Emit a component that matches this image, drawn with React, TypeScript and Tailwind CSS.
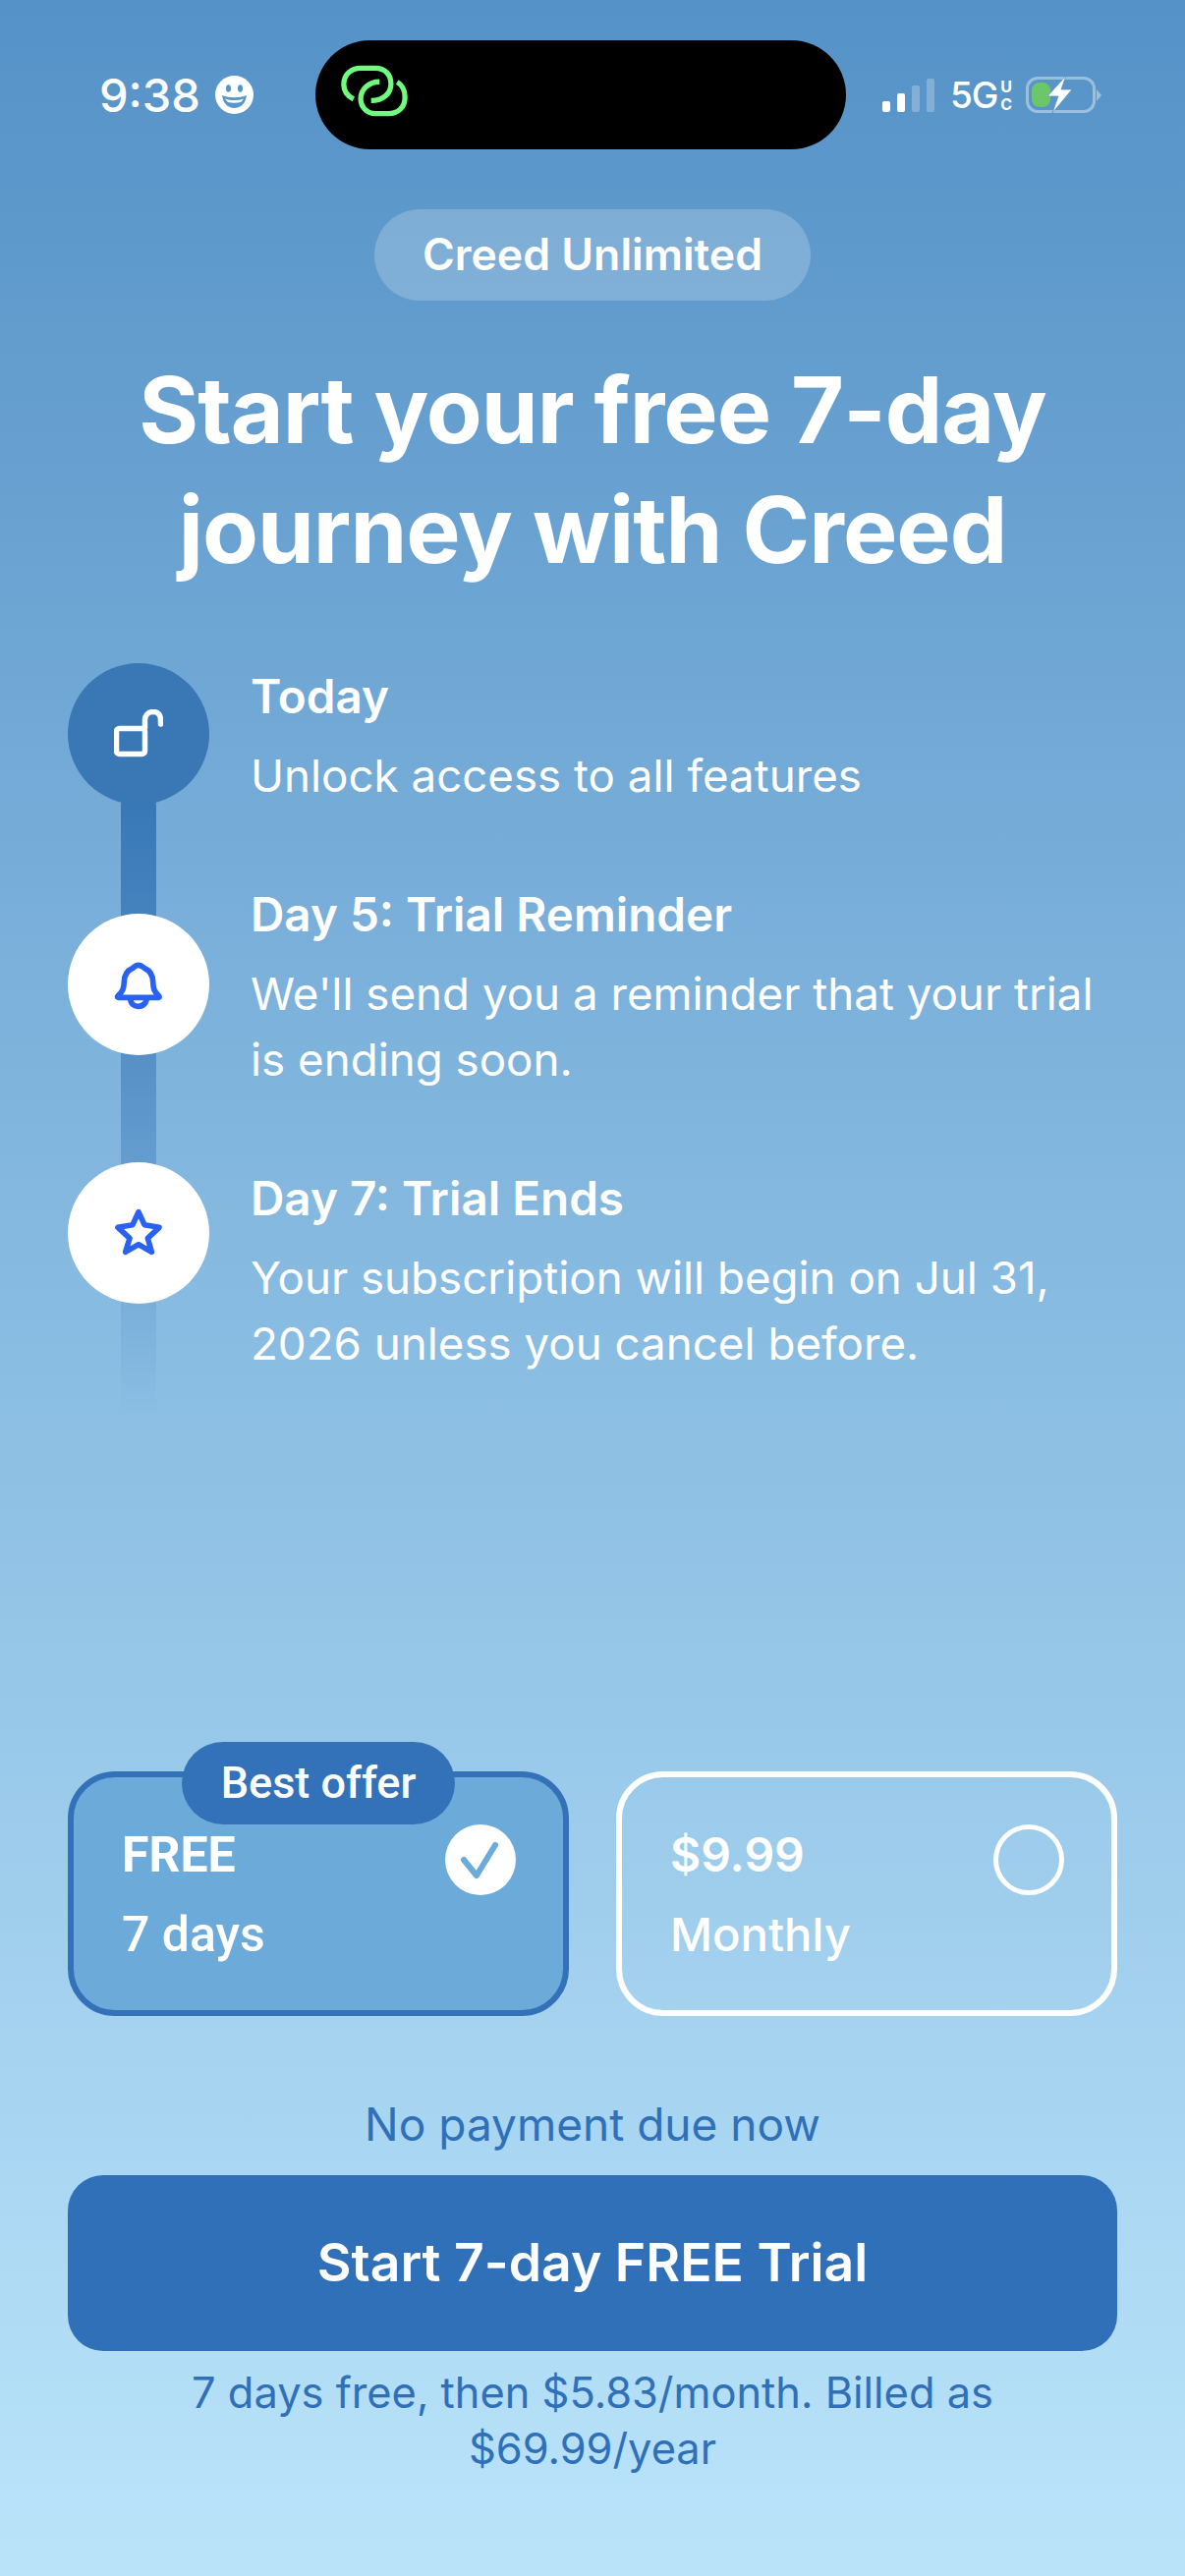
import React from "react";

const inter = { fontFamily: "Inter, sans-serif" };

function StatusBar() {
  return (
    <div className="flex items-center pt-[41px] text-white">
      <div className="w-[321px] pl-[101px] flex items-center gap-[15px]">
        <span className="text-[47px] leading-none font-medium">9:38</span>
        <svg width="39" height="39" viewBox="0 0 39 39">
          <circle cx="19.5" cy="19.5" r="19.5" fill="#fff" />
          <ellipse cx="13.5" cy="13" rx="2.6" ry="3.8" fill="#5a96c9" />
          <ellipse cx="25.5" cy="13" rx="2.6" ry="3.8" fill="#5a96c9" />
          <path d="M7 20 C15 23 24 23 32 20 C31 28 26 33 19.5 33 C13 33 8 28 7 20Z" fill="#5a96c9" />
          <path d="M10 23.5 C16 25.5 23 25.5 29 23.5 C28 25 27 26 26 27 C22 28 17 28 13 27 C12 26 11 25 10 23.5Z" fill="#fff" />
        </svg>
      </div>
      <div className="w-[540px] h-[111px] rounded-full bg-black flex items-center pl-[26px] shrink-0">
        <svg width="68" height="53" viewBox="800 60 204 160" fill="none" stroke="#70fb7c" strokeWidth="16" strokeLinecap="butt" className="-mt-[8px]">
          <path d="M838 165 C818 155 808 140 808 120 C808 90 830 70 860 70 L905 70 C935 70 953 90 953 118 C953 148 930 170 892 170" />
          <path d="M972 113 C988 122 996 140 996 160 C996 190 975 210 945 210 L905 210 C880 210 860 190 860 165 C860 135 885 112 918 112" />
        </svg>
      </div>
      <div className="flex-1 flex items-center pl-[37px]">
        <div className="flex items-end gap-[7px] h-[34px] w-[54px]">
          <div className="w-[8px] h-[11px] rounded-[2px] bg-white" />
          <div className="w-[8px] h-[19px] rounded-[2px] bg-white" />
          <div className="w-[8px] h-[27px] rounded-[2px] bg-white/25" />
          <div className="w-[8px] h-[34px] rounded-[2px] bg-white/25" />
        </div>
        <span className="ml-[15px] text-[37px] leading-none font-medium tracking-[-1px]">5G</span>
        <div className="ml-[2px] flex flex-col items-center text-[16px] leading-[18px] font-bold w-[13px]">
          <span>U</span>
          <span>C</span>
        </div>
        <div className="relative ml-[13px] w-[71px] h-[37px] rounded-[12px] border-[3px] border-white/40">
          <div className="absolute left-[3px] top-[3px] w-[19px] h-[25px] rounded-[8px] bg-[#6cc76b]" />
          <svg width="28" height="40" viewBox="0 0 28 40" className="absolute left-[18px] -top-[5px]">
            <path d="M20 1 L1 22 L12 22 L6 39 L26 15 L15 15 Z" fill="#fff" stroke="#5a96c9" strokeWidth="0.8" />
          </svg>
          <div className="absolute -right-[9px] top-[10px] w-0 h-0 border-y-[6px] border-y-transparent border-l-[5px] border-l-white/40" />
        </div>
      </div>
    </div>
  );
}

function UnlockIcon() {
  return (
    <svg width="50" height="50" viewBox="0 0 50 50" fill="none" stroke="#fff" strokeWidth="5.5" strokeLinecap="round" strokeLinejoin="round">
      <rect x="2.5" y="19.5" width="29" height="26" rx="3" />
      <path d="M31.5 19 V11 C31.5 6 35 2.5 40 2.5 C45 2.5 47.5 6 47.5 11 V15" />
    </svg>
  );
}

function BellIcon() {
  return (
    <svg width="60" height="60" viewBox="33 33 180 180" fill="none" stroke="#2962f0" strokeWidth="17" strokeLinecap="round" strokeLinejoin="round">
      <path d="M122 64 C112 64 108 72 104 74 C90 80 80 92 79 115 C78 135 75 145 60 158 C58 160 58 163 62 163 H184 C187 163 187 160 185 158 C170 145 168 135 167 115 C166 92 156 80 142 74 C138 72 134 64 122 64 Z" />
      <path d="M98 168 C100 185 112 190 122 190 C132 190 144 185 148 168" />
    </svg>
  );
}

function StarIcon() {
  return (
    <svg width="60" height="60" viewBox="33 42 180 180" fill="none" stroke="#2962f0" strokeWidth="17" strokeLinecap="round" strokeLinejoin="round">
      <path d="M123 68 L141 107 L186 115 L151 148 L163 190 L123 167 L83 190 L96 148 L60 115 L105 107 Z" />
    </svg>
  );
}

function Step({ icon, dark, title, lines, offset }: { icon: React.ReactNode; dark?: boolean; title: string; lines: string[]; offset: string }) {
  return (
    <div className="flex items-start gap-[42px]">
      <div className={`w-[144px] h-[144px] rounded-full flex items-center justify-center shrink-0 ${dark ? "bg-[#3a78b5]" : "bg-white"} ${offset}`}>
        {icon}
      </div>
      <div className="text-white">
        <div className="text-[47.6px] leading-[66px] font-semibold mb-[14px]">{title}</div>
        {lines.map((l) => (
          <div key={l} className="text-[45.7px] leading-[67px] font-normal">{l}</div>
        ))}
      </div>
    </div>
  );
}

export default function App() {
  return (
    <div
      className="w-[1206px] h-[2622px] flex flex-col bg-linear-to-b from-[#5592c7] to-[#bae4fa] overflow-hidden"
      style={inter}
    >
      <StatusBar />

      <div className="self-center mt-[61px] w-[444px] h-[93px] rounded-full bg-white/20 flex items-center justify-center text-white text-[44.6px] font-semibold">
        Creed Unlimited
      </div>

      <h1 className="mt-[50px] text-center text-white text-[93px] leading-[122px] font-bold tracking-[-1px]">
        Start your free 7-day
        <br />
        journey with Creed
      </h1>

      <div className="relative mt-[76px] px-[69px] flex flex-col gap-[75px]">
        <div className="absolute left-[123px] top-[130px] w-[36px] h-[635px] rounded-t-[14px] bg-linear-to-b from-[#3877b7] to-[#3877b7]/0" />
        <div className="relative">
          <Step dark offset="-mt-[1px]" icon={<UnlockIcon />} title="Today" lines={["Unlock access to all features"]} />
        </div>
        <div className="relative">
          <Step offset="mt-[32px]" icon={<BellIcon />} title="Day 5: Trial Reminder" lines={["We'll send you a reminder that your trial", "is ending soon."]} />
        </div>
        <div className="relative">
          <Step offset="-mt-[4px]" icon={<StarIcon />} title="Day 7: Trial Ends" lines={["Your subscription will begin on Jul 31,", "2026 unless you cancel before."]} />
        </div>
      </div>

      <div className="mt-auto px-[69px] flex gap-[48px]">
        <div className="relative flex-1 h-[249px] rounded-[48px] border-[6px] border-[#3372b8] bg-[#6caad9] pt-[49px] pl-[49px] pr-[48px] flex justify-between items-start text-white" style={{ fontFamily: "Roboto, sans-serif" }}>
          <div className="absolute left-[110px] -top-[36px] w-[278px] h-[84px] rounded-full bg-[#3372b8] flex items-center justify-center text-[45px] font-medium">
            Best offer
          </div>
          <div>
            <div className="text-[50px] leading-[60px] font-bold">FREE</div>
            <div className="text-[50px] leading-[60px] font-medium mt-[21px]">7 days</div>
          </div>
          <div className="w-[72px] h-[72px] rounded-full bg-white flex items-center justify-center -mt-[1px]">
            <svg width="72" height="72" viewBox="-36 -36 72 72" fill="none" stroke="#6caad9" strokeWidth="6" strokeLinecap="round" strokeLinejoin="round">
              <path d="M-17 0 L-4 16 L15 -15" />
            </svg>
          </div>
        </div>
        <div className="flex-1 h-[249px] rounded-[48px] border-[6px] border-white pt-[49px] pl-[49px] pr-[48px] flex justify-between items-start text-white">
          <div>
            <div className="text-[48px] leading-[60px] font-semibold">$9.99</div>
            <div className="text-[47.2px] leading-[60px] font-medium mt-[21px]">Monthly</div>
          </div>
          <div className="w-[72px] h-[72px] rounded-full border-[5px] border-white -mt-[1px]" />
        </div>
      </div>

      <div className="mt-[80px] text-center text-[#3070b8] text-[46px] leading-[60px]">No payment due now</div>

      <div className="mt-[22px] mx-[69px] h-[179px] rounded-[36px] bg-[#3070b8] flex items-center justify-center text-white text-[53.5px] font-semibold">
        Start 7-day FREE Trial
      </div>

      <div className="mt-[14px] mb-[101px] text-center text-[#3070b8] text-[43.4px] leading-[57px]">
        7 days free, then $5.83/month. Billed as
        <br />
        $69.99/year
      </div>
    </div>
  );
}
